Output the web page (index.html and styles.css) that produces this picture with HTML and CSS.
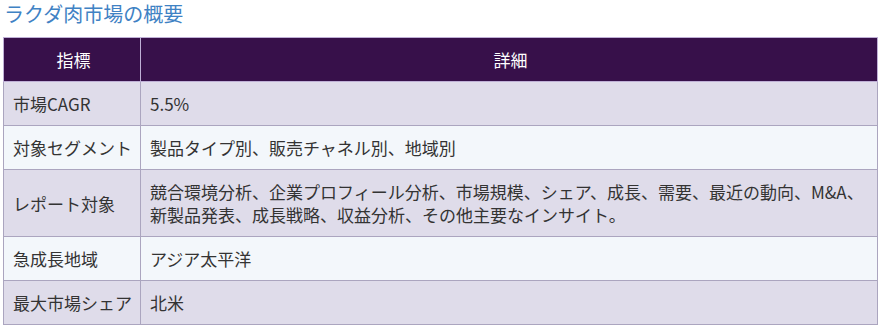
FILE: index.html
```html
<!DOCTYPE html>
<html lang="ja">
<head>
<meta charset="utf-8">
<link rel="stylesheet" href="styles.css">
</head>
<body>
<h2 class="title">ラクダ肉市場の概要</h2>
<table class="overview">
  <colgroup><col class="col-key"><col class="col-val"></colgroup>
  <thead>
    <tr><th>指標</th><th>詳細</th></tr>
  </thead>
  <tbody>
    <tr><td class="key">市場CAGR</td><td>5.5%</td></tr>
    <tr><td class="key">対象セグメント</td><td>製品タイプ別、販売チャネル別、地域別</td></tr>
    <tr><td class="key">レポート対象</td><td>競合環境分析、企業プロフィール分析、市場規模、シェア、成長、需要、最近の動向、M&amp;A、<br>新製品発表、成長戦略、収益分析、その他主要なインサイト。</td></tr>
    <tr><td class="key">急成長地域</td><td>アジア太平洋</td></tr>
    <tr><td class="key">最大市場シェア</td><td>北米</td></tr>
  </tbody>
</table>
</body>
</html>
```
FILE: styles.css
```css
html, body {
  margin: 0;
  padding: 0;
  background: #ffffff;
}
body {
  padding: 0 3px;
  font-family: "Noto Sans CJK JP", "Noto Sans", sans-serif;
  color: #333333;
}
.title {
  margin: 0;
  height: 37px;
  font-size: 20px;
  font-weight: normal;
  line-height: 28px;
  color: #3f82c4;
  padding-left: 1px;
}
.overview {
  border-collapse: collapse;
  table-layout: fixed;
  width: 875px;
  font-size: 17px;
  line-height: 23px;
}
.col-key {
  width: 137px;
}
.overview th,
.overview td {
  border: 1px solid #aba5bf;
  padding: 10px 6px 10px 9px;
  text-align: left;
  vertical-align: middle;
}
.overview .key {
  white-space: nowrap;
}
.overview th {
  background: #37104a;
  color: #ffffff;
  font-weight: normal;
  text-align: center;
  border-color: #bfb0d6;
}
.overview tbody tr:nth-child(odd) td {
  background: #dfdcea;
}
.overview tbody tr:nth-child(even) td {
  background: #f3f7fb;
}
```
